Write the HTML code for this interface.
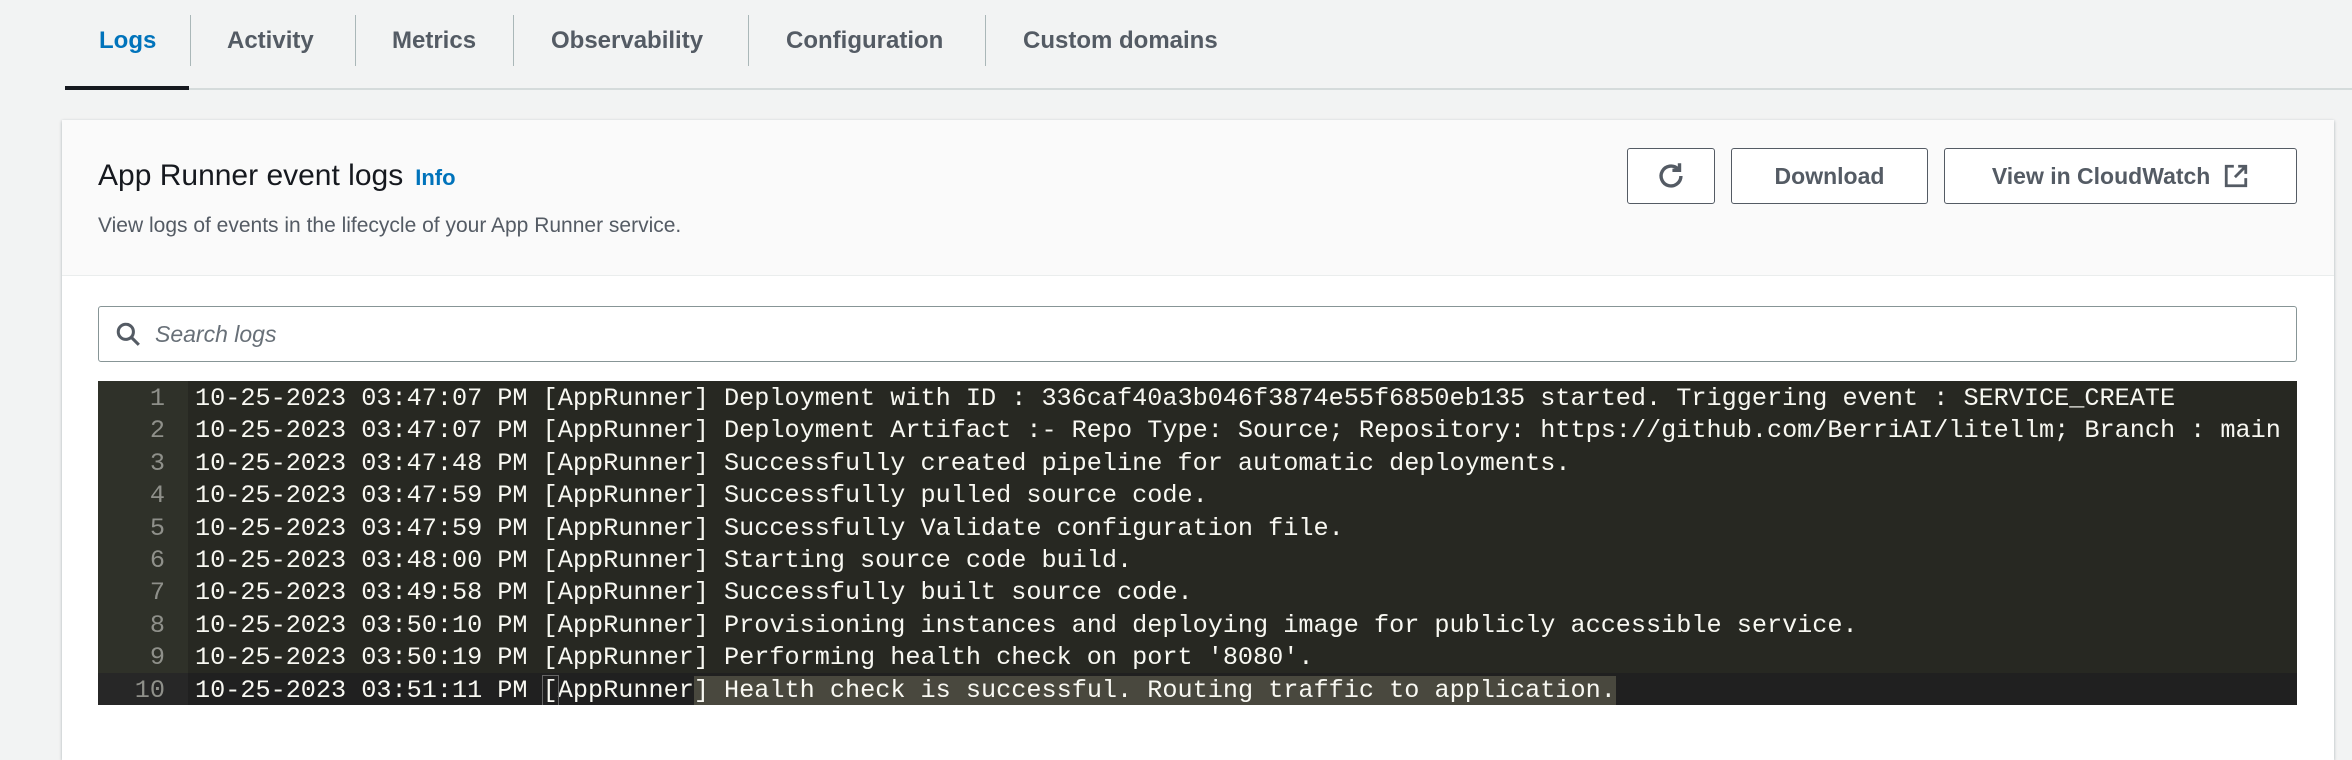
<!DOCTYPE html>
<html><head><meta charset="utf-8"><style>
*{box-sizing:border-box;margin:0;padding:0}
html,body{width:2352px;height:736px;overflow:hidden;background:#f2f3f3;font-family:"Liberation Sans",sans-serif}
.tab{position:absolute;top:25px;font-size:24px;font-weight:bold;color:#545b64;line-height:32px}
.sep{position:absolute;top:15px;width:1px;height:51px;background:#aab7b8}
.tabline{position:absolute;left:65px;right:0;top:88px;height:2px;background:#d5dbdb}
.active{position:absolute;left:65px;width:124px;top:86px;height:4px;background:#16191f}
.card{position:absolute;left:62px;top:120px;width:2272px;height:640px;background:#fff;box-shadow:0 1px 3px rgba(0,28,36,.3)}
.head{position:absolute;left:0;top:0;right:0;height:156px;background:#fafafa;border-bottom:1px solid #eaeded}
.title{position:absolute;left:36px;top:39px;font-size:30px;color:#16191f}
.info{font-size:22px;font-weight:bold;color:#0073bb;margin-left:12px}
.sub{position:absolute;left:36px;top:94px;font-size:21px;color:#545b64}
.btn{position:absolute;top:28px;height:56px;border:1.5px solid #545b64;border-radius:3px;background:#fff;color:#545b64;font-size:23px;font-weight:bold;display:flex;align-items:center;justify-content:center}
.search{position:absolute;left:36px;top:186px;width:2199px;height:56px;border:1.5px solid #879596;border-radius:3px;background:#fff}
.search span{position:absolute;left:56px;top:14px;font-size:23px;font-style:italic;color:#687078}
.log{position:absolute;left:36px;top:261px;width:2199px;height:324px;background:#272822;font-family:"Liberation Mono",monospace;font-size:25.2px;color:#f8f8f2;overflow:hidden}
.gut{position:absolute;left:0;top:0;width:90px;height:324px;background:#2f3129}
.row{position:absolute;left:0;width:100%;height:32.4px;line-height:35px;white-space:pre;overflow:hidden}
.row .n{position:absolute;left:0;top:0;width:67px;height:32.4px;text-align:right;color:#8f908a}
.row .t{position:absolute;left:97px;top:0}
.sel{background:#49483e}
</style></head><body>
<div class="tab" style="left:99px;color:#0073bb">Logs</div>
<div class="sep" style="left:190px"></div>
<div class="tab" style="left:227px">Activity</div>
<div class="sep" style="left:355px"></div>
<div class="tab" style="left:392px">Metrics</div>
<div class="sep" style="left:513px"></div>
<div class="tab" style="left:551px">Observability</div>
<div class="sep" style="left:748px"></div>
<div class="tab" style="left:786px">Configuration</div>
<div class="sep" style="left:985px"></div>
<div class="tab" style="left:1023px">Custom domains</div>
<div class="tabline"></div><div class="active"></div>
<div class="card">
 <div class="head">
  <div class="title">App Runner event logs<span class="info">Info</span></div>
  <div class="sub">View logs of events in the lifecycle of your App Runner service.</div>
  <div class="btn" style="left:1565px;width:88px"><svg width="34" height="34" viewBox="0 0 24 24" fill="none" stroke="#545b64" stroke-width="2.4"><path d="M19 12a7 7 0 1 1-2.2-5.1"/><path d="M18 3v5h-5"/></svg></div>
  <div class="btn" style="left:1669px;width:197px">Download</div>
  <div class="btn" style="left:1882px;width:353px">View in CloudWatch&nbsp;&nbsp;<svg width="26" height="26" viewBox="0 0 24 24" fill="none" stroke="#545b64" stroke-width="2.6"><path d="M10 3H3v18h18v-7"/><path d="M14 3h7v7M21 3L11 13"/></svg></div>
 </div>
 <div class="search"><svg style="position:absolute;left:16px;top:14px" width="26" height="26" viewBox="0 0 24 24" fill="none" stroke="#545b64" stroke-width="2.8"><circle cx="10" cy="10" r="7"/><path d="M15 15l7 7"/></svg><span>Search logs</span></div>
 <div class="log"><div class="gut"></div>
<div class="row" style="top:0"><span class="n">1</span><span class="t">10-25-2023 03:47:07 PM [AppRunner] Deployment with ID : 336caf40a3b046f3874e55f6850eb135 started. Triggering event : SERVICE_CREATE</span></div>
<div class="row" style="top:32.4px"><span class="n">2</span><span class="t">10-25-2023 03:47:07 PM [AppRunner] Deployment Artifact :- Repo Type: Source; Repository: https://github.com/BerriAI/litellm; Branch : main</span></div>
<div class="row" style="top:64.8px"><span class="n">3</span><span class="t">10-25-2023 03:47:48 PM [AppRunner] Successfully created pipeline for automatic deployments.</span></div>
<div class="row" style="top:97.2px"><span class="n">4</span><span class="t">10-25-2023 03:47:59 PM [AppRunner] Successfully pulled source code.</span></div>
<div class="row" style="top:129.6px"><span class="n">5</span><span class="t">10-25-2023 03:47:59 PM [AppRunner] Successfully Validate configuration file.</span></div>
<div class="row" style="top:162px"><span class="n">6</span><span class="t">10-25-2023 03:48:00 PM [AppRunner] Starting source code build.</span></div>
<div class="row" style="top:194.4px"><span class="n">7</span><span class="t">10-25-2023 03:49:58 PM [AppRunner] Successfully built source code.</span></div>
<div class="row" style="top:226.8px"><span class="n">8</span><span class="t">10-25-2023 03:50:10 PM [AppRunner] Provisioning instances and deploying image for publicly accessible service.</span></div>
<div class="row" style="top:259.2px"><span class="n">9</span><span class="t">10-25-2023 03:50:19 PM [AppRunner] Performing health check on port '8080'.</span></div>
<div class="row" style="top:291.6px;background:#202020"><span class="n" style="background:#272727;width:90px;padding-right:23px">10</span><span class="t">10-25-2023 03:51:11 PM <span style="outline:1px solid #666">[</span>AppRunner<span class="sel">] Health check is successful. Routing traffic to application.</span></span></div>
 </div>
</div>
</body></html>
